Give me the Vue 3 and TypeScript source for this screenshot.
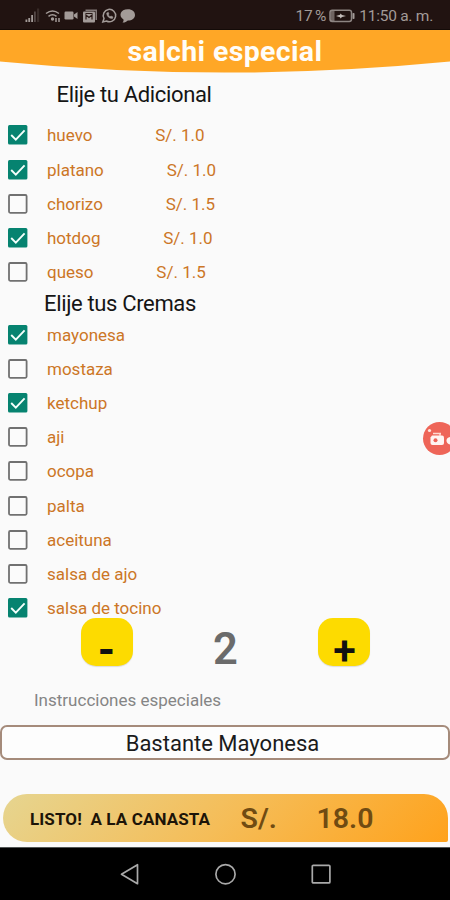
<script setup lang="ts">
import { computed, ref } from 'vue'

interface Option {
  name: string
  price?: string
  checked: boolean
}

const extras = ref<Option[]>([
  { name: 'huevo', price: '1.0', checked: true },
  { name: 'platano', price: '1.0', checked: true },
  { name: 'chorizo', price: '1.5', checked: false },
  { name: 'hotdog', price: '1.0', checked: true },
  { name: 'queso', price: '1.5', checked: false },
])

const sauces = ref<Option[]>([
  { name: 'mayonesa', checked: true },
  { name: 'mostaza', checked: false },
  { name: 'ketchup', checked: true },
  { name: 'aji', checked: false },
  { name: 'ocopa', checked: false },
  { name: 'palta', checked: false },
  { name: 'aceituna', checked: false },
  { name: 'salsa de ajo', checked: false },
  { name: 'salsa de tocino', checked: true },
])

const quantity = ref(2)
const total = computed(() => (quantity.value * 9).toFixed(1))
const decrease = () => {
  if (quantity.value > 1) quantity.value--
}
const increase = () => {
  quantity.value++
}
</script>

<template>
  <div class="screen">
    <div class="status">
      <svg class="status-icons" width="112" height="18" viewBox="0 0 112 18">
        <g fill="#a39b98">
          <rect x="0.5" y="12.5" width="1.8" height="2.5" />
          <rect x="3.3" y="11" width="1.8" height="4" />
          <rect x="6.2" y="8" width="1.8" height="7" />
          <rect x="9" y="4.5" width="1.8" height="10.5" opacity=".4" />
          <rect x="12" y="1.5" width="2.2" height="13.5" opacity=".18" />
          <rect x="39.5" y="4.5" width="9" height="8" rx="1.2" />
          <path d="M49 7.5 L52.5 5 V12 L49 9.5Z" />
          <path d="M60.5 2.500 H72 V13 H70.500 V4 H60.5Z" opacity=".75" />
          <rect x="58" y="4.500" width="12" height="11" rx="1" />
          <path d="M102.8 2.2 C107.5 2.2 110 4.8 110 8 C110 11.5 107 13.5 102.8 13.5 C101.500 15 99 15.8 97.5 15.5 C98.5 14.5 98.7 13.5 98.5 12.5 C93 9 95.5 2.2 102.8 2.2Z" />
        </g>
        <path d="M61 12.500 V8 L64 10.500 L67 8 V12.500 M60.500 6.500 H67.500" fill="none" stroke="#2a1a17" stroke-width="1.200" />
        <g fill="none" stroke="#a39b98" stroke-width="1.5">
          <path d="M21 6.5 Q27.5 1.5 34 6.5 M23.5 9.3 Q27.5 6.2 31.5 9.3" />
          <path d="M31 11 V15 M34 11 V15" />
          <path d="M77.8 15 L79 11.500 A6.2 6.2 0 1 1 81.5 14Z" />
          <path d="M81.7 6 C81.5 9 84.5 12 87.5 11.4 L88 9.9 L86 9 L85 9.8 L83.3 7.9 L84 7 L83.3 5.2Z" fill="#a39b98" stroke-width=".5" />
        </g>
        <circle cx="27.5" cy="12" r="1.700" fill="#a39b98" />
      </svg>
      <div class="status-right">
        <span class="percent">17 %</span>
        <svg class="battery" width="26" height="14" viewBox="0 0 26 14">
          <rect x="1" y="1.2" width="21.5" height="11.3" rx="2.2" fill="none" stroke="#8d8582" stroke-width="1.500" />
          <rect x="1.5" y="2" width="4" height="10" fill="#a39b98" opacity=".6" />
          <rect x="23.5" y="4" width="2" height="6" rx=".8" fill="#a39b98" />
          <path d="M7 7 L11 5.8 L11.5 4.500 L13 5.900 L17 7 L13 8.100 L11.5 9.500 L11 8.200Z" fill="#c4bdba" />
        </svg>
        <span class="clock">11:50 a. m.</span>
      </div>
    </div>

    <header class="header">
      <svg class="header-shape" width="450" height="43" viewBox="0 0 450 43">
        <path d="M0 0 H450 V31.5 Q335 42.6 225 42.6 Q115 42.6 0 31.5Z" fill="#ffa726" />
      </svg>
      <h1>salchi especial</h1>
    </header>

    <main>
      <h2 class="title-extras">Elije tu Adicional</h2>
      <label v-for="item in extras" :key="item.name" class="option">
        <input v-model="item.checked" type="checkbox" />
        <svg class="box" width="20" height="20" viewBox="0 0 20 20">
          <template v-if="item.checked">
            <rect width="19.4" height="19.6" rx="1.5" fill="#068370" />
            <path d="M3.2 10 L7.8 14.6 L16.6 5.3" fill="none" stroke="#f4fffc" stroke-width="1.9" />
          </template>
          <rect v-else x="1" y="1" width="17.6" height="17.8" rx="1.2" fill="#fbfbfb" stroke="#717171" stroke-width="1.8" />
        </svg>
        <span class="name">{{ item.name }}</span>
        <span class="price">S/. {{ item.price }}</span>
      </label>

      <h2 class="title-sauces">Elije tus Cremas</h2>
      <label v-for="item in sauces" :key="item.name" class="option">
        <input v-model="item.checked" type="checkbox" />
        <svg class="box" width="20" height="20" viewBox="0 0 20 20">
          <template v-if="item.checked">
            <rect width="19.4" height="19.6" rx="1.5" fill="#068370" />
            <path d="M3.2 10 L7.8 14.6 L16.6 5.3" fill="none" stroke="#f4fffc" stroke-width="1.9" />
          </template>
          <rect v-else x="1" y="1" width="17.6" height="17.8" rx="1.2" fill="#fbfbfb" stroke="#717171" stroke-width="1.8" />
        </svg>
        <span class="name">{{ item.name }}</span>
      </label>

      <div class="quantity">
        <button class="step minus" @click="decrease"><span>-</span></button>
        <span class="count">{{ quantity }}</span>
        <button class="step plus" @click="increase"><span>+</span></button>
      </div>

      <p class="hint">Instrucciones especiales</p>
      <div class="note">Bastante Mayonesa</div>

      <button class="submit">
        <span class="submit-label">LISTO!&nbsp; A LA CANASTA</span>
        <span class="currency">S/.</span>
        <span class="total">{{ total }}</span>
      </button>
    </main>

    <nav class="nav">
      <svg width="22" height="24" viewBox="0 0 22 24">
        <path d="M2.500 11.200 L18.5 1.700 V20.700Z" fill="none" stroke="#a9a9a9" stroke-width="1.7" stroke-linejoin="round" />
      </svg>
      <svg width="22" height="24" viewBox="0 0 22 24">
        <circle cx="11.500" cy="11.200" r="9.6" fill="none" stroke="#a9a9a9" stroke-width="1.7" />
      </svg>
      <svg width="22" height="24" viewBox="0 0 22 24">
        <rect x="2.3" y="2.300" width="17.6" height="17.6" rx="1" fill="none" stroke="#a9a9a9" stroke-width="1.7" />
      </svg>
    </nav>

    <svg class="recorder" width="28" height="34" viewBox="0 0 28 34">
      <circle cx="17.5" cy="16.500" r="16.5" fill="#ee6558" />
      <circle cx="7.500" cy="8.500" r="1.6" fill="#ffe6df" />
      <g fill="#fff5f2">
        <path d="M10 13.500 H20 Q22 13.500 22 15.500 V21 Q22 23 20 23 H10.500 Q8.500 23 8.500 21 V15.500Z" />
        <path d="M28 15 Q24.500 15.500 24.500 18.500 Q24.500 21.500 28 22.500Z" />
      </g>
      <path d="M11 11.500 H19 M18 11 V14" fill="none" stroke="#ffd9d0" stroke-width="1.5" />
      <circle cx="13.500" cy="18.300" r="2" fill="#ee6558" />
    </svg>
  </div>
</template>

<style>
body {
  margin: 0;
  background: #fafafa;
}
</style>

<style scoped>
.screen {
  position: relative;
  display: flex;
  flex-direction: column;
  width: 450px;
  height: 900px;
  overflow: hidden;
  background: #fafafa;
  font-family: Roboto, 'Liberation Sans', sans-serif;
}
button {
  border: 0;
  padding: 0;
  font-family: inherit;
}
.status {
  display: flex;
  justify-content: space-between;
  box-sizing: border-box;
  height: 30px;
  padding: 7px 17px 0 25px;
  background: #211311;
  border-bottom: 1px solid #140b08;
  color: #a39b98;
}
.status-right {
  display: flex;
  height: 18px;
  align-items: center;
  white-space: nowrap;
}
.percent {
  font-size: 15.5px;
  letter-spacing: -0.2px;
  word-spacing: -1px;
}
.battery {
  margin: 0 4px 0 3px;
}
.clock {
  font-size: 15.5px;
  letter-spacing: -0.25px;
}
.header {
  display: grid;
  height: 43px;
}
.header-shape,
h1 {
  grid-area: 1 / 1;
}
h1 {
  margin: 0;
  color: #fffdf8;
  font-size: 28.5px;
  font-weight: 700;
  letter-spacing: 0.35px;
  line-height: 43px;
  text-align: center;
}
main {
  display: flex;
  flex-direction: column;
  height: 774px;
}
h2 {
  margin: 0;
  color: #151515;
  font-size: 22px;
  font-weight: 400;
  letter-spacing: -0.35px;
  white-space: nowrap;
}
.title-extras {
  height: 45.4px;
  padding-left: 56.5px;
  line-height: 44px;
}
.title-sauces {
  height: 28.2px;
  padding-left: 44px;
  line-height: 30px;
}
.option {
  display: flex;
  flex: none;
  align-items: center;
  height: 34.2px;
  padding-left: 8px;
}
.option input {
  display: none;
}
.box {
  flex: none;
  margin-right: 19px;
}
.name,
.price {
  color: #cc7626;
  font-size: 17px;
  line-height: 34px;
  white-space: pre;
}
.price {
  margin-left: 62.8px;
}
.quantity {
  display: flex;
  flex: none;
  justify-content: space-between;
  height: 49px;
  margin: -7.4px 79.5px 0 80.5px;
}
.step {
  width: 52px;
  height: 48.5px;
  border-radius: 15px;
  background: #fddb00;
  box-shadow: 0 1px 1px #0000001f;
  color: #111;
  line-height: 64px;
}
.step span {
  display: block;
  height: 48px;
}
.minus {
  font-size: 44px;
  font-weight: 700;
}
.plus {
  font-size: 41px;
  font-weight: 600;
  line-height: 65px;
}
.count {
  color: #6b6b6b;
  font-size: 43.5px;
  font-weight: 600;
  line-height: 64px;
}
.hint {
  height: 58px;
  margin: 0;
  padding-left: 34px;
  color: #858585;
  font-size: 17px;
  line-height: 67px;
}
.note {
  box-sizing: border-box;
  height: 35px;
  padding-right: 5px;
  border: 2px solid #a58b7b;
  border-radius: 7px;
  background: #fdfdfd;
  color: #1b1b1b;
  font-size: 22px;
  line-height: 33px;
  text-align: center;
}
.submit {
  display: flex;
  flex: none;
  align-items: center;
  width: 445px;
  height: 48px;
  margin: 34px 2px 0 3px;
  padding-left: 27px;
  border-radius: 24px 24px 2px 24px;
  background: linear-gradient(135deg, #e6d590, #f5bd58 50%, #ffa21c);
  white-space: pre;
}
.submit-label {
  width: 210.5px;
  padding-top: 2px;
  color: #1c1408;
  font-size: 17px;
  font-weight: 700;
  letter-spacing: 0.1px;
  text-align: left;
}
.currency,
.total {
  padding-top: 2px;
  color: #704b12;
  font-size: 28.5px;
  font-weight: 600;
  text-align: left;
}
.currency {
  width: 76px;
}
.nav {
  display: flex;
  justify-content: center;
  gap: 73.5px;
  box-sizing: border-box;
  height: 53px;
  padding-top: 15px;
  border-top: 1px solid #515555;
  background: #000;
}
.recorder {
  position: absolute;
  top: 422px;
  right: 0;
}
</style>
